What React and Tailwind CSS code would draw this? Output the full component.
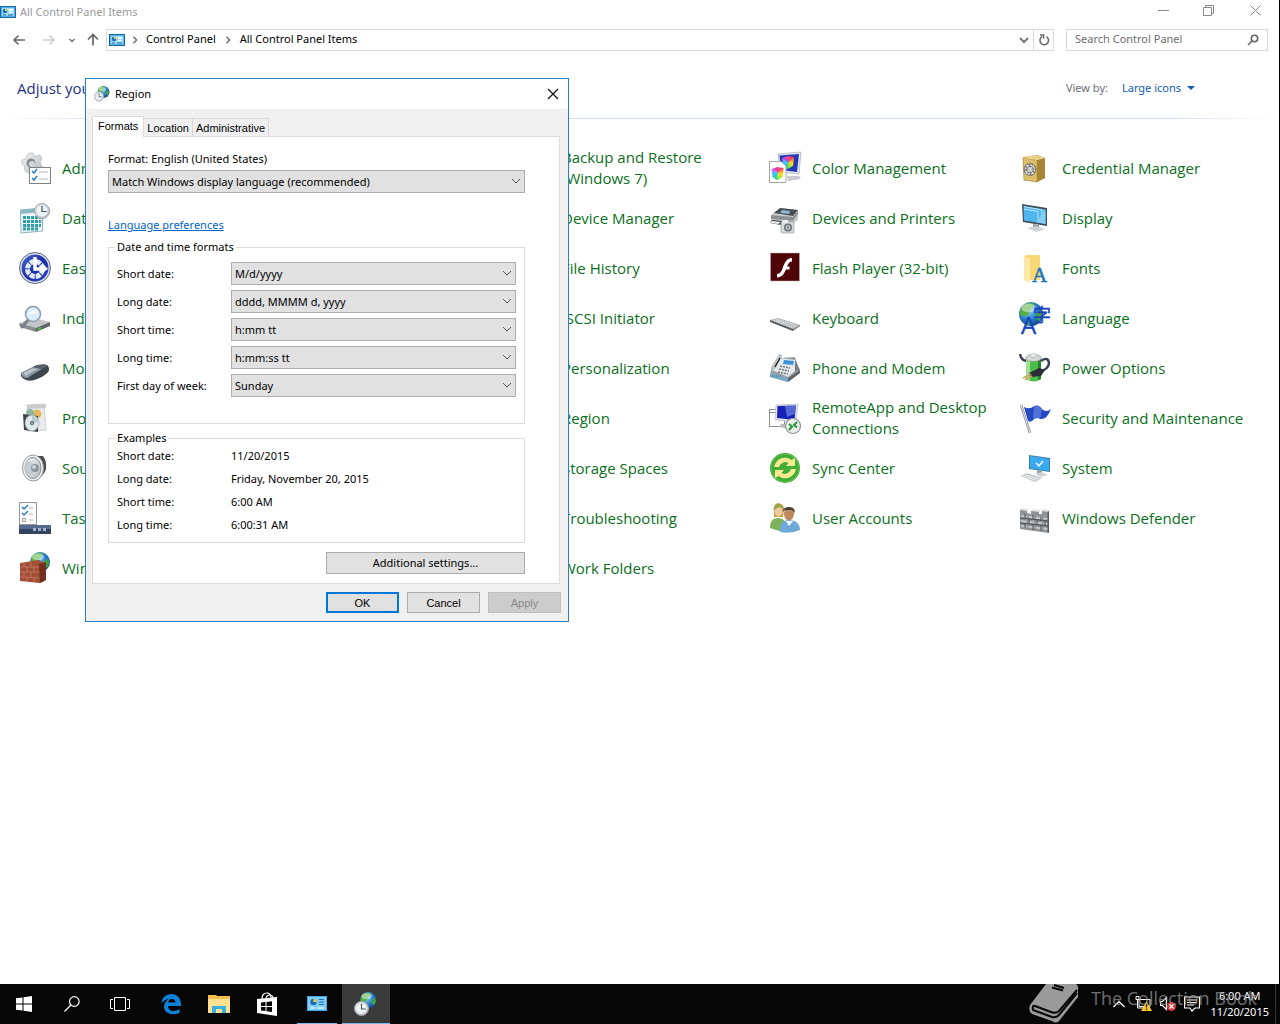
import React, { useState } from 'react';

const Globe = ({ cx, cy, r }) => (
  <g transform={`translate(${cx} ${cy}) scale(${r / 10})`}>
    <circle r="10" fill="url(#globe)" />
    <path d="M-8.500-5C-6-9-1-9.500 2-9L3-7L0-4L-2 0L-5 2L-9 1Z" fill="#58b03c" />
    <path d="M4-1L8-3L9.500 1L7 6L4 4Z" fill="#3f9f42" />
    <path d="M-4 4L0 5L-1 9.500L-4 9Z" fill="#3f9a4a" />
    <ellipse cx="-2" cy="-5" rx="6" ry="3.500" fill="#fff" opacity=".45" />
  </g>
);

const Clock = ({ cx, cy, r }) => (
  <g transform={`translate(${cx} ${cy}) scale(${r / 8})`}>
    <circle r="7.500" fill="url(#silver)" stroke="#9aa1a6" />
    <circle r="5.800" fill="#eef3f5" stroke="#c3cacf" strokeWidth=".5" />
    <path d="M0-5V0.500H4.500" fill="none" stroke="#44555f" strokeWidth="1.200" />
  </g>
);

const ColorCube = ({ x, y, s }) => (
  <g transform={`translate(${x} ${y}) scale(${s})`}>
    <path d="M0 2L6 5L5 12L1 9Z" fill="url(#cubeleft)" />
    <path d="M6 5L11 1L10 9L5 12Z" fill="url(#cuberight)" />
    <path d="M0 2L5 0L11 1L6 5Z" fill="url(#cubetop)" />
  </g>
);

const ControlPanelArt = () => (
  <g>
    <rect x=".5" y=".5" width="15" height="11" fill="#4fb4ee" stroke="#1767a5" />
    <rect x="2" y="2" width="12" height="8" fill="#9edcfb" />
    <circle cx="5" cy="5" r="2.300" fill="#1b6fb5" />
    <path d="M5 5V2.700A2.300 2.300 0 0 1 7.300 5Z" fill="#f4d03f" />
    <path d="M9 3h4v2H9zM9 6h4v1H9z" fill="#fff" />
    <path d="M3 9h3M8 9h5" stroke="#1767a5" />
  </g>
);

// Same drawing without the dark frame, for the taskbar
const ControlPanelTile = () => (
  <g>
    <rect width="20" height="15" fill="#3fa9e5" />
    <rect x="1" y="1" width="18" height="13" fill="#7fd0f8" />
    <circle cx="6.500" cy="6" r="3.200" fill="#1d6fb4" />
    <path d="M6.500 6V2.800A3.200 3.200 0 0 1 9.700 6Z" fill="#f2cf49" />
    <path d="M12 3.500h5M12 6h5M12 8.500h5" stroke="#1d6fb4" strokeWidth="1.200" />
    <path d="M3 12h5M10 12h7" stroke="#fff" strokeWidth="1.200" />
  </g>
);

const icons = {
  tools: (
    <>
      <path d="M10 1l4 0 1 3 3 0 3-1 2 4-2 3 1 3 2 2-1 4-4 0-2 3-4 2-2-3-4-1-2-3 1-3-3-2 0-4 4-1 1-3z" fill="url(#silver)" stroke="#a9adb0" strokeWidth=".6" />
      <circle cx="12" cy="11" r="4.500" fill="#858b90" />
      <circle cx="13" cy="12" r="3" fill="#d3d7da" />
      <rect x="10.500" y="15.500" width="21" height="16" fill="#fdfdfd" stroke="#7b8084" />
      <path d="M13 19l2 2 3-4M13 26l2 2 3-4" fill="none" stroke="#2f7fc1" strokeWidth="1.500" />
      <path d="M20 20h9M20 27h9" stroke="#b4b9bc" />
    </>
  ),
  date: (
    <>
      <path d="M1.500 8L23.500 6V29L2 31Z" fill="#f0f8f9" stroke="#8fb5bd" />
      <path d="M1 8L24 6V10L1 12Z" fill="#8db7c1" />
      <path d="M4 15.500H22M4 19.500H22M4 23.500H22M4 27H20" stroke="#2e9fac" strokeWidth="3" strokeDasharray="3 1" />
      <Clock cx={23} cy={9} r={8} />
    </>
  ),
  ease: (
    <>
      <circle cx="16" cy="16" r="15.500" fill="#dfe4ee" stroke="#596684" />
      <circle cx="16" cy="16" r="13.500" fill="url(#deepblue)" />
      <circle cx="16" cy="17" r="7.500" fill="none" stroke="#e6ecf7" strokeWidth="5" strokeDasharray="5 1" />
      <path d="M16 5v12h9" fill="none" stroke="#fff" strokeWidth="3.500" />
      <path d="M23 11l6 6-6 4z" fill="#fff" />
    </>
  ),
  index: (
    <>
      <path d="M0 21L15 16L31 20L17 27Z" fill="#c2c6c8" />
      <path d="M0 21L17 26V30L1 25Z" fill="#868c90" />
      <path d="M17 26L31 20V24L17 30Z" fill="#5f666a" />
      <path d="M19 26l3-1v2l-3 1z" fill="#4dc340" />
      <path d="M10 17L3 25" stroke="#777f88" strokeWidth="3" strokeLinecap="round" />
      <circle cx="14" cy="12" r="7.500" fill="#dcefff" stroke="#8b99a7" strokeWidth="1.500" />
      <path d="M9 12Q14 6 19 11Q14 11 9 12" fill="#fff" />
    </>
  ),
  mouse: (
    <>
      <path d="M2 21L14 15C20 12 27 12 29 14C31 17 30 20 27 22C21 27 12 30 7 28C3 26 1 24 2 21Z" fill="#3d454d" />
      <path d="M2 21L14 15L23 17C18 20 12 23 9 26C5 26 2 24 2 21Z" fill="#8d99a4" />
      <path d="M4 21L14 16.500L19 17C14 19 10 21 7 24Z" fill="#bdc7d0" />
      <path d="M14 15C20 12 26 12 29 14L23 17Z" fill="#56616b" />
    </>
  ),
  programs: (
    <>
      <path d="M8 3L25 2L27 28L9 29Z" fill="#e9ebec" stroke="#b6b9bb" strokeWidth=".6" />
      <path d="M8 3L27 2V6L8 7Z" fill="#c9cccf" />
      <circle cx="18" cy="12" r="4.500" fill="#e9b45e" />
      <circle cx="11" cy="11" r="4" fill="#8fb8a2" />
      <path d="M4 12L19 14V30L5 28Z" fill="#3d4248" />
      <ellipse cx="13" cy="21" rx="7" ry="8" fill="#dfe8ea" stroke="#949b9f" strokeWidth=".6" />
      <path d="M13 13Q19 16 20 20L13 21Z" fill="#b4cdd5" />
      <circle cx="13" cy="21" r="2" fill="#4f565b" />
      <circle cx="13" cy="21" r=".8" fill="#fff" />
    </>
  ),
  sound: (
    <>
      <path d="M14 4L24 4Q28 9 27 17Q26 22 17 29Z" fill="#4b4e50" />
      <ellipse cx="14" cy="16" rx="10.500" ry="13" fill="#f4f4f4" stroke="#9a9a9a" />
      <ellipse cx="14" cy="16" rx="8" ry="10.500" fill="url(#silver)" stroke="#8b9094" />
      <path d="M8 9Q16 11 16 16Q16 22 8 23Q4 16 8 9Z" fill="#c5cdd2" />
      <circle cx="16" cy="16" r="4" fill="#8997a2" />
      <circle cx="15" cy="15" r="2" fill="#c9d6e0" />
    </>
  ),
  taskbar: (
    <>
      <rect x=".5" y=".5" width="17" height="22" fill="#fcfcfc" stroke="#92979c" />
      <path d="M3 5l2 2 4-4M3 11l2 2 4-4" fill="none" stroke="#2f7fc1" strokeWidth="1.500" />
      <rect x="3.500" y="16.500" width="3" height="3" fill="none" stroke="#b8a0a0" />
      <path d="M10 6h4M10 12h4M10 18h4" stroke="#bbb" />
      <rect y="23" width="32" height="9" fill="#33435f" />
      <rect y="23" width="32" height="4" fill="#566a90" />
      <path d="M14 26h3v3h-3zM19 26h3v3h-3zM24 26h3v3h-3z" fill="#a5b3cb" />
    </>
  ),
  firewall: (
    <>
      <Globe cx={21} cy={10} r={10} />
      <path d="M1 11L20 8L27 12V28L21 31L1 29Z" fill="#a34e36" />
      <path d="M20 12L27 10V28L21 31Z" fill="#74301f" />
      <path d="M1 15L20 15M1 20L20 20M1 25L20 26M5 11V15M12 10V15M8 15V20M15 15V20M5 20V25M12 20V25M8 25V29M15 26V30" stroke="#c98469" strokeWidth=".7" />
    </>
  ),
  color: (
    <>
      <path d="M9 2L32 0L30 22L11 20Z" fill="#dfe3ec" stroke="#9aa2b5" strokeWidth=".6" />
      <path d="M10.500 3.500L30 2L28 20L12 18Z" fill="#2338b8" />
      <ColorCube x={13} y={4} s={1.1} />
      <path d="M18 24L30 24L32 27L19 29Z" fill="#c9ccd0" />
      <path d="M.5 9.500H12L17 14V30.500H.5Z" fill="#fff" stroke="#a5a8ab" />
      <ColorCube x={2.5} y={15} s={1.1} />
    </>
  ),
  printer: (
    <>
      <path d="M3 12L11 6L29 8V18L21 24L2 19Z" fill="#c9cbcd" />
      <path d="M5 11L11 6L29 8L24 14Z" fill="#454c52" />
      <path d="M13 8L21 9L20 12L11 11Z" fill="#93b6ce" />
      <path d="M2 13L24 15L29 9V12L24 19L2 17Z" fill="#8c9093" />
      <path d="M3 18L13 19L12 23L1 21Z" fill="#3f4346" />
      <path d="M3 19L12 20L9 22L1 21Z" fill="#eee" />
      <rect x="12" y="20" width="13" height="11" rx="1" fill="#d5d8da" stroke="#8c9194" strokeWidth=".6" />
      <rect x="13" y="18" width="6" height="3" fill="#eceeef" />
      <circle cx="19" cy="25.500" r="4" fill="#6f7478" />
      <circle cx="19" cy="25.500" r="2.300" fill="#d5dee4" />
      <circle cx="19" cy="25.500" r="1" fill="#444" />
    </>
  ),
  flash: (
    <>
      <rect x="1.500" y="1" width="29" height="28" fill="#4d0508" stroke="#c9b5b5" strokeWidth=".5" />
      <path d="M23 6C18 6 16 10 14 15C13 19 11 22 8 22V25.500C13 25 15 22 17 17.500H20.500V14.500H18C19.500 11 20.500 9.500 23 9.500Z" fill="#fff" />
    </>
  ),
  keyboard: (
    <>
      <path d="M1 18L9 16L31 23L24 27Z" fill="#a5a9ad" />
      <path d="M1 18L24 27V29L1 20Z" fill="#55595d" />
      <path d="M24 27L31 23V24L24 29Z" fill="#777" />
      <path d="M4 18L25 26M6 17.500L27 25M8 17L29 24" stroke="#dfe1e3" strokeWidth="1.200" strokeDasharray="2 .7" />
    </>
  ),
  phone: (
    <>
      <path d="M2 18L10 6L26 5L31 21L19 30L1 25Z" fill="#9aa0a5" />
      <path d="M3 18L11 6L26 8L26 19L19 25Z" fill="#e5e8ea" />
      <path d="M15 8L25 9L24 13L14 12Z" fill="#3a93d8" />
      <path d="M11 14L21 16M10 17L20 19M9 20L19 22" stroke="#71787e" strokeWidth="1.500" strokeDasharray="2 1" />
      <path d="M4 16L11 4" stroke="#bdc3c7" strokeWidth="4" strokeLinecap="round" />
      <path d="M6 15L11 6" stroke="#23272a" strokeWidth="1.500" />
      <path d="M1 21L19 26V30L1 25Z" fill="#76a9c8" />
      <path d="M19 26L31 18V21L19 30Z" fill="#5d646a" />
      <path d="M26 8L31 18L26 19Z" fill="#777d82" />
      <path d="M3 24h9" stroke="#2c6c96" strokeDasharray="1 1" />
    </>
  ),
  remote: (
    <>
      <rect x=".5" y="7.500" width="15" height="17" fill="#fff" stroke="#8c9196" />
      <path d="M1 10.500H8" stroke="#8c9196" />
      <path d="M7 3L29 2L27 20L6 18Z" fill="#e1e4ea" stroke="#a4a9b2" strokeWidth=".5" />
      <path d="M8.500 4L27 3.500L25.500 18L8 16Z" fill="#1521b6" />
      <path d="M16 4L27 3.500L26 12L18 15Z" fill="#6e86e3" opacity=".7" />
      <path d="M12 22L20 22V27L10 25Z" fill="#bbbfc4" />
      <circle cx="24" cy="24" r="7.500" fill="#ececec" stroke="#909599" strokeWidth="1.200" />
      <path d="M20 22L23 24.500L20 28M28 20L25 23L28 25.500" fill="none" stroke="#259a37" strokeWidth="2" />
    </>
  ),
  sync: (
    <>
      <circle cx="16" cy="16" r="15" fill="#3fad36" />
      <circle cx="16" cy="16" r="14" fill="none" stroke="#5fc14c" />
      <path d="M5 15A11 11 0 0 1 22.500 8L26 6V14H17L19.500 11A6.500 6.500 0 0 0 10 15Z" fill="#fce891" />
      <path d="M27 17A11 11 0 0 1 9.500 24L6 26V18H15L12.500 21A6.500 6.500 0 0 0 22 17Z" fill="#fce891" />
    </>
  ),
  users: (
    <>
      <path d="M1 26C1 19 4 16 9 16C15 16 17 20 17 25L10 29Z" fill="#7cb25a" />
      <path d="M5 6Q5 2 9 1Q15 2 15 7L14 15L5 15Z" fill="#c09e40" />
      <ellipse cx="9.500" cy="9.500" rx="4" ry="5" fill="#f1c9a0" />
      <path d="M4 8Q6 1 12 3L15 7L10 5Z" fill="#90a547" />
      <path d="M11 30C10 22 14 18 20 18C27 18 31 22 31 28Q22 32 11 30Z" fill="#6ea9d9" />
      <path d="M17 19L20 24L24 19Z" fill="#fff" />
      <ellipse cx="20" cy="12" rx="5" ry="6.500" fill="#bd8a60" />
      <path d="M14 10Q14 5 20 5Q26 5 26 11L23 8L16 8Z" fill="#4a3d35" />
    </>
  ),
  safe: (
    <>
      <path d="M4 5L18 3L26 6V26L18 30L5 28Z" fill="#c5a24f" />
      <path d="M4 6L18 8V30L5 28Z" fill="#dcbf6d" stroke="#a78636" strokeWidth=".6" />
      <path d="M18 8L26 6V26L18 30Z" fill="#a98634" />
      <path d="M4 6L15 3L26 6L18 8Z" fill="#ead38c" />
      <circle cx="11" cy="17.500" r="6.500" fill="#7e7a70" />
      <circle cx="11" cy="17.500" r="4.500" fill="none" stroke="#e2e2df" strokeWidth="1.500" strokeDasharray="2 1.500" />
      <circle cx="11" cy="17.500" r="2.500" fill="#c9c9c6" />
      <path d="M7 13L15 22M15 13L7 22" stroke="#ddd" />
    </>
  ),
  display: (
    <>
      <path d="M3 2L28 6V24L4 20Z" fill="#3f4b55" />
      <path d="M4.500 4L26.500 7.500V22L5 18.500Z" fill="#4eb5ee" />
      <path d="M5 7L19 9.500V20.500M5 4.500L23 8V21" fill="none" stroke="#b9e4fa" />
      <path d="M26.500 7.500V22L17 20Z" fill="#83cff5" />
      <path d="M14 22L20 23V26L14 26Z" fill="#939a9f" />
      <path d="M8 26L17 24L26 27L18 30Z" fill="#ced3d6" />
    </>
  ),
  fonts: (
    <>
      <path d="M5 4L8 3H21V28H9Z" fill="#f8d775" />
      <path d="M5 4L11 7V31L5 28Z" fill="#fce9a5" />
      <text x="13" y="30" fontSize="21" fontFamily="Liberation Serif, serif" fill="#1f75b5" stroke="#1f75b5" strokeWidth=".6">A</text>
    </>
  ),
  language: (
    <>
      <Globe cx={12} cy={12} r={12} />
      <text x="14" y="20" fontSize="18" fontFamily="Noto Sans CJK JP, sans-serif" fill="#173fc0" stroke="#173fc0" strokeWidth=".4">字</text>
      <text x="2" y="32" fontSize="24" fontFamily="Open Sans, sans-serif" fill="#1443c6" stroke="#1443c6" strokeWidth=".4">A</text>
    </>
  ),
  power: (
    <>
      <path d="M7 6V27Q15 32 22 27V6Z" fill="#4bbd49" />
      <path d="M7 6V27Q9 29 11 29V7Z" fill="#9ee194" />
      <path d="M19 7V28L22 27V6Z" fill="#24812a" />
      <ellipse cx="14.500" cy="6" rx="8" ry="3.500" fill="#d5d9d6" stroke="#838b86" strokeWidth=".6" />
      <ellipse cx="14.500" cy="3.500" rx="3.500" ry="1.800" fill="#eee" stroke="#8b928d" strokeWidth=".5" />
      <path d="M1 2Q2 8 7 9M22 9Q29 4 30 11Q30 17 20 20" fill="none" stroke="#3b4150" strokeWidth="2.400" />
      <path d="M10 21L20 16L26 18L22 24L12 25Z" fill="#2c2d34" />
      <path d="M4 26L12 22M6 28L13 24" stroke="#c9a45d" strokeWidth="1.500" />
    </>
  ),
  flag: (
    <>
      <path d="M2 3L11 31" stroke="#8f959b" strokeWidth="2.500" />
      <path d="M2 3L11 31" stroke="#dfe3e6" strokeWidth="1" />
      <path d="M5 5Q11 8 15 4Q20 2 23 7Q27 11 32 7Q28 18 21 17Q17 14 13 19Q11 20 9 19Z" fill="#2748c4" />
      <path d="M15 4Q20 2 23 7L21 17Q17 14 14 18Z" fill="#6d8ce8" opacity=".6" />
    </>
  ),
  system: (
    <>
      <path d="M10 3L31 6V20L10 17Z" fill="#3c7fa8" />
      <path d="M11 4L30 7V19L11 16Z" fill="#38aaf0" />
      <path d="M17 11L20 14L24 9" fill="none" stroke="#fff" strokeWidth="1.500" />
      <path d="M18 18L23 19V22H18Z" fill="#9aa0a4" />
      <path d="M16 22L23 20L29 23L22 25Z" fill="#cfd3d5" />
      <path d="M1 24L8 21L23 26L16 30Z" fill="#c3c7ca" />
      <path d="M3 24L17 28M6 23L20 27" stroke="#f2f2f2" />
    </>
  ),
  defender: (
    <>
      <path d="M1 7L8 8V11L12 12V8L20 9V12L23 12V8L30 9V31L1 27Z" fill="#8f9396" />
      <path d="M1 7L4 6L9 7V9L1 8ZM12 8L15 7L21 8V10L12 9ZM22 8L25 7L30 8V10L22 9Z" fill="#e4e5e6" />
      <path d="M2 14L29 17M2 19L29 22M2 24L29 27" stroke="#c3c6c8" strokeWidth="2" strokeDasharray="6 1.500" />
      <path d="M1 16L30 19M1 21L30 24M6 12V16M14 13V17M22 15V19M10 17V21M18 18V23M26 19V24M6 22V26M14 23V28M22 24V29" stroke="#4d5154" />
      <path d="M28.500 10L30 9V31L28.500 30Z" fill="#55595c" />
    </>
  ),
};

const items = [
  ['Administrative Tools', 'tools'], ['AutoPlay'], ['Backup and Restore (Windows 7)'], ['Color Management', 'color'], ['Credential Manager', 'safe'],
  ['Date and Time', 'date'], ['Default Programs'], ['Device Manager'], ['Devices and Printers', 'printer'], ['Display', 'display'],
  ['Ease of Access Center', 'ease'], ['File Explorer Options'], ['File History'], ['Flash Player (32-bit)', 'flash'], ['Fonts', 'fonts'],
  ['Indexing Options', 'index'], ['Internet Options'], ['iSCSI Initiator'], ['Keyboard', 'keyboard'], ['Language', 'language'],
  ['Mouse', 'mouse'], ['Network and Sharing Center'], ['Personalization'], ['Phone and Modem', 'phone'], ['Power Options', 'power'],
  ['Programs and Features', 'programs'], ['Recovery'], ['Region'], ['RemoteApp and Desktop Connections', 'remote'], ['Security and Maintenance', 'flag'],
  ['Sound', 'sound'], ['Speech Recognition'], ['Storage Spaces'], ['Sync Center', 'sync'], ['System', 'system'],
  ['Taskbar and Navigation', 'taskbar'], ['Text to Speech'], ['Troubleshooting'], ['User Accounts', 'users'], ['Windows Defender', 'defender'],
  ['Windows Firewall', 'firewall'], ['Windows To Go'], ['Work Folders'],
];

const formats = [
  { id: 'short-date', label: 'Short date:', value: 'M/d/yyyy' },
  { id: 'long-date', label: 'Long date:', value: 'dddd, MMMM d, yyyy' },
  { id: 'short-time', label: 'Short time:', value: 'h:mm tt' },
  { id: 'long-time', label: 'Long time:', value: 'h:mm:ss tt' },
  { id: 'first-day', label: 'First day of week:', value: 'Sunday' },
];

const examples = [
  ['Short date:', '11/20/2015'],
  ['Long date:', 'Friday, November 20, 2015'],
  ['Short time:', '6:00 AM'],
  ['Long time:', '6:00:31 AM'],
];

// Shared gradients for the item icons
const Gradients = () => (
  <svg className="absolute h-0 w-0" aria-hidden="true">
    <defs>
      <radialGradient id="globe" cx=".4" cy=".35" r=".7">
        <stop offset="0" stopColor="#8fd4f5" />
        <stop offset=".6" stopColor="#2479c4" />
        <stop offset="1" stopColor="#123f83" />
      </radialGradient>
      <linearGradient id="silver" x1="0" y1="0" x2="1" y2="1">
        <stop offset="0" stopColor="#f4f5f6" />
        <stop offset="1" stopColor="#b3b9bd" />
      </linearGradient>
      <linearGradient id="deepblue" x1="0" y1="0" x2="1" y2="1">
        <stop offset="0" stopColor="#4a6cd0" />
        <stop offset=".5" stopColor="#1c2fa6" />
        <stop offset="1" stopColor="#2846c4" />
      </linearGradient>
      <linearGradient id="cubeleft" x1="0" y1="0" x2="0" y2="1">
        <stop offset="0" stopColor="#f04df0" />
        <stop offset=".4" stopColor="#35c6ff" />
        <stop offset="1" stopColor="#20e070" />
      </linearGradient>
      <linearGradient id="cuberight" x1="0" y1="0" x2="0" y2="1">
        <stop offset="0" stopColor="#ff4a2a" />
        <stop offset=".5" stopColor="#ffe01e" />
        <stop offset="1" stopColor="#4ce83a" />
      </linearGradient>
      <linearGradient id="cubetop" x1="0" y1="0" x2="1" y2="0">
        <stop offset="0" stopColor="#c94dff" />
        <stop offset="1" stopColor="#ff3b30" />
      </linearGradient>
    </defs>
  </svg>
);

const Chevron = ({ className }) => (
  <svg viewBox="0 0 10 10" className={className} fill="none" stroke="currentColor" aria-hidden="true">
    <path d="M1 3l4 4 4-4" />
  </svg>
);

const Combo = ({ id, value }) => (
  <div className="relative flex-1">
    <select id={id} className="block h-[23px] w-full appearance-none border border-[#adadad] bg-[#e1e1e1] pl-[3px] pr-6 text-[11px] leading-4">
      <option>{value}</option>
    </select>
    <Chevron className="pointer-events-none absolute right-1 top-1.5 h-[10px] w-[10px] text-[#555]" />
  </div>
);

const TitleBar = () => (
  <header className="flex h-6 items-center">
    <svg viewBox="0 0 16 12" className="h-3 w-4 shrink-0" aria-hidden="true"><ControlPanelArt /></svg>
    <h1 className="ml-1 flex-1 text-[11px] text-[#999]">All Control Panel Items</h1>
    <div className="mb-1 flex text-[#888]">
      <button aria-label="Minimize" className="flex h-5 w-[45px] items-center justify-center">
        <svg viewBox="0 0 11 11" className="h-[11px] w-[11px]" stroke="currentColor"><path d="M0 5.500h11" /></svg>
      </button>
      <button aria-label="Restore" className="flex h-5 w-[45px] items-center justify-center">
        <svg viewBox="0 0 11 11" className="h-[11px] w-[11px]" fill="none" stroke="currentColor"><path d="M.5 2.500h8v8h-8zM2.500 2.500v-2h8v8h-2" /></svg>
      </button>
      <button aria-label="Close" className="flex h-5 w-12 items-center justify-center">
        <svg viewBox="0 0 11 11" className="h-[11px] w-[11px]" stroke="currentColor"><path d="M.5.5l10 10M10.500.5l-10 10" /></svg>
      </button>
    </div>
  </header>
);

const AddressBar = () => (
  <div className="mt-1 flex h-[23px] items-center pr-[11px]">
    <nav className="flex w-[106px] items-center pl-3" aria-label="History">
      <button aria-label="Back" className="text-[#666]">
        <svg viewBox="0 0 14 12" className="h-3 w-[14px]" fill="none" stroke="currentColor" strokeWidth="1.500"><path d="M13 6H2M6.500 1.500L2 6l4.500 4.500" /></svg>
      </button>
      <button aria-label="Forward" className="ml-4 text-[#ccc]">
        <svg viewBox="0 0 14 12" className="h-3 w-[14px]" fill="none" stroke="currentColor" strokeWidth="1.500"><path d="M1 6h11M7.500 1.500L12 6l-4.500 4.500" /></svg>
      </button>
      <button aria-label="Recent locations" className="ml-3 text-[#777]">
        <svg viewBox="0 0 8 8" className="h-2 w-2" fill="none" stroke="currentColor" strokeWidth="1.500"><path d="M1.500 3L4 5.500 6.500 3" /></svg>
      </button>
      <button aria-label="Up" className="ml-[11px] text-[#666]">
        <svg viewBox="0 0 12 13" className="h-[13px] w-3" fill="none" stroke="currentColor" strokeWidth="1.700"><path d="M6 12.500V2M1 6.500L6 1.500l5 5" /></svg>
      </button>
    </nav>
    <div className="flex h-[22px] flex-1 items-center border border-[#d9d9d9] text-[11px]">
      <svg viewBox="0 0 16 12" className="ml-0.5 h-3 w-4" aria-hidden="true"><ControlPanelArt /></svg>
      <Chevron className="ml-1.5 mr-[7px] h-2 w-2 -rotate-90 stroke-2 text-[#777]" />
      <a href="#control-panel">Control Panel</a>
      <Chevron className="mx-2 h-2 w-2 -rotate-90 stroke-2 text-[#777]" />
      <a href="#all-items">All Control Panel Items</a>
      <button aria-label="Previous locations" className="ml-auto mr-1">
        <Chevron className="h-[10px] w-[10px] stroke-2 text-[#777]" />
      </button>
      <button aria-label="Refresh" className="flex h-full w-5 items-center justify-center border-l border-[#d9d9d9] text-[#666]">
        <svg viewBox="0 0 12 12" className="h-3 w-3" fill="none" stroke="currentColor" strokeWidth="1.500"><path d="M8.500 2.700A4.300 4.300 0 1 1 4 2.700M2 1H5.500V4.500" /></svg>
      </button>
    </div>
    <label className="ml-3 flex h-[22px] w-[202px] items-center border border-[#d9d9d9] pl-2 pr-2">
      <input type="text" aria-label="Search Control Panel" placeholder="Search Control Panel" className="min-w-0 flex-1 text-[11px] outline-none placeholder:text-[#6d6d6d]" />
      <svg viewBox="0 0 12 12" className="h-3 w-3 text-[#666]" fill="none" stroke="currentColor" strokeWidth="1.600" aria-hidden="true"><circle cx="7.500" cy="4.500" r="3.200" /><path d="M5 7L1 11" /></svg>
    </label>
  </div>
);

const tabs = ['Formats', 'Location', 'Administrative'];

const RegionDialog = () => {
  const [tab, setTab] = useState('Formats');

  return (
    <section role="dialog" aria-labelledby="region-title" className="absolute left-[85px] top-[78px] w-[484px] border border-[#2a80c4] bg-[#f0f0f0] text-[11px] leading-4 text-black">
      <div className="flex h-[30px] items-center bg-white pl-2 pr-[9px]">
        <svg viewBox="0 0 32 32" className="h-4 w-4" aria-hidden="true"><Globe cx={19} cy={12} r={12} /><Clock cx={10} cy={21} r={10} /></svg>
        <h2 id="region-title" className="ml-[5px] flex-1">Region</h2>
        <button aria-label="Close Region">
          <svg viewBox="0 0 12 12" className="h-3 w-3" stroke="#111" strokeWidth="1.200"><path d="M1 1l10 10M11 1L1 11" /></svg>
        </button>
      </div>

      <div className="px-1.5 pt-[7px]">
        <div role="tablist" className="flex items-end font-['Liberation_Sans',Arial,sans-serif]">
          {tabs.map((name) => (
            <button
              key={name}
              role="tab"
              aria-selected={tab === name}
              onClick={() => setTab(name)}
              className={
                tab === name
                  ? 'relative -mb-px h-[21px] border border-b-0 border-[#dcdcdc] bg-white px-[5px] pb-0.5'
                  : 'h-[18px] border border-b-0 border-l-0 border-[#d9d9d9] px-[3px]'
              }
            >
              {name}
            </button>
          ))}
        </div>

        <div role="tabpanel" className="mr-0.5 border border-[#dcdcdc] bg-white pb-[9px] pl-[15px] pr-[34px] pt-3.5">
          <label htmlFor="format" className="mb-[3px] block">Format: English (United States)</label>
          <Combo id="format" value="Match Windows display language (recommended)" />
          <a href="#language" className="mt-6 inline-block text-[#0066cc] underline">Language preferences</a>

          <fieldset className="mt-1.5 border border-[#dcdcdc] pb-[26px] pl-2 pr-2">
            <legend className="-ml-0.5 px-0.5">Date and time formats</legend>
            <div className="mt-[7px] flex flex-col gap-[5px]">
              {formats.map((f) => (
                <div key={f.id} className="flex items-center">
                  <label htmlFor={f.id} className="w-[114px]">{f.label}</label>
                  <Combo id={f.id} value={f.value} />
                </div>
              ))}
            </div>
          </fieldset>

          <fieldset className="mt-1.5 border border-[#dcdcdc] pb-[9px] pl-2">
            <legend className="-ml-0.5 px-0.5">Examples</legend>
            <dl className="mt-0.5 flex flex-col gap-[7px]">
              {examples.map(([name, value]) => (
                <div key={name} className="flex">
                  <dt className="w-[114px]">{name}</dt>
                  <dd>{value}</dd>
                </div>
              ))}
            </dl>
          </fieldset>

          <button className="ml-auto mt-[9px] block h-[22px] w-[199px] border border-[#adadad] bg-[#e1e1e1]">Additional settings...</button>
        </div>
      </div>

      <div className="flex justify-end gap-2 pb-2 pr-[7px] pt-2 font-['Liberation_Sans',Arial,sans-serif]">
        <button className="h-[21px] w-[73px] border-2 border-[#0078d7] bg-[#e1e1e1] leading-4">OK</button>
        <button className="h-[21px] w-[73px] border border-[#adadad] bg-[#e1e1e1]">Cancel</button>
        <button disabled className="h-[21px] w-[73px] border border-[#bfbfbf] bg-[#cccccc] text-[#8a8a8a]">Apply</button>
      </div>
    </section>
  );
};

const Taskbar = () => (
  <footer className="relative flex h-10 shrink-0 items-stretch overflow-hidden bg-[#060606] text-white">
    <div className="flex">
      <button aria-label="Start" className="flex w-12 items-center justify-center">
        <svg viewBox="0 0 16 16" className="h-4 w-4" fill="currentColor"><path d="M0 2.300L6.500 1.400V7.500H0zM7.500 1.300L16 0V7.500H7.500zM0 8.500H6.500V14.600L0 13.700zM7.500 8.500H16V16L7.500 14.700z" /></svg>
      </button>
      <button aria-label="Search" className="flex w-12 items-center justify-center">
        <svg viewBox="0 0 16 16" className="h-4 w-4" fill="none" stroke="currentColor" strokeWidth="1.200"><circle cx="10.300" cy="5.500" r="4.800" /><path d="M7 9L.5 15.500" /></svg>
      </button>
      <button aria-label="Task View" className="flex w-12 items-center justify-center">
        <svg viewBox="0 0 20 14" className="h-[14px] w-5" fill="none" stroke="currentColor"><path d="M4.500.5h11v13h-11zM3 2.500H.5v9H3M17 2.500h2.500v9H17" /></svg>
      </button>
    </div>
    <div className="ml-[3px] flex">
      <button aria-label="Edge" className="flex w-12 items-center justify-center">
        <svg viewBox="0 0 20 20" className="h-5 w-5" fill="#0b80d8"><path d="M.3 9.500C1 3.500 5 0 10.300 0C16 0 20 4.200 20 10V12H7C7.300 18 14 18 18.500 15V19C12 22 3 20 3 12.500C3 9.500 5 6.500 8 5.200C4.500 5.200 1.700 7 .3 9.500ZM7.200 8.500H14.500C14.500 4 8 3.500 7.200 8.500Z" /></svg>
      </button>
      <button aria-label="File Explorer" className="flex w-12 items-center justify-center">
        <svg viewBox="0 0 22 18" className="h-[18px] w-[22px]"><path d="M0 0h8l1 1h13v17H0z" fill="#f2bd4b" /><path d="M0 4h22v14H0z" fill="#fde191" /><path d="M4 18v-7h14v7h-4v-4H8v4z" fill="#38b1e0" /></svg>
      </button>
      <button aria-label="Store" className="flex w-12 items-center justify-center">
        <svg viewBox="0 0 22 24" className="h-6 w-[22px]"><path d="M1 7L21 5V24L1 21Z" fill="#fff" /><path d="M6 7Q6 1 11 1Q15 1 15 6M10 6Q11 3 13 3Q17 3 17 6" fill="none" stroke="#fff" strokeWidth="1.200" /><path d="M5 10.500L9.500 10V14H5zM10.500 10L16 9.300V14H10.500zM5 15H9.500V19L5 18.400zM10.500 15H16V20L10.500 19.200z" fill="#060606" /></svg>
      </button>
      <button aria-label="Control Panel" className="ml-1.5 flex w-10 items-center justify-center border-b border-[#76b9ed]">
        <svg viewBox="0 0 20 15" className="h-[15px] w-5"><ControlPanelTile /></svg>
      </button>
      <button aria-label="Region" className="ml-[5px] flex w-12 items-center justify-center border-b border-[#76b9ed] bg-[#3a3a3a]">
        <svg viewBox="0 0 32 32" className="h-6 w-6"><Globe cx={19} cy={11} r={11} /><Clock cx={10} cy={22} r={10} /></svg>
      </button>
    </div>

    <div className="ml-auto flex items-center border-r border-[#333] pr-1.5">
      <button aria-label="Show hidden icons" className="mr-2.5">
        <svg viewBox="0 0 12 8" className="h-2 w-3" fill="none" stroke="currentColor" strokeWidth="1.300"><path d="M.5 7L6 1.500 11.500 7" /></svg>
      </button>
      <button aria-label="Network" className="mr-2">
        <svg viewBox="0 0 17 16" className="h-4 w-[17px]"><path d="M4 3.500h11v7H4zM1 .5h3v3H1zM2.500 4v8h6" fill="none" stroke="#fff" /><path d="M11.500 5L17 15H6Z" fill="#f7c52b" /><path d="M11.500 8v3.500M11.500 12.500v1.500" stroke="#222" strokeWidth="1.200" /></svg>
      </button>
      <button aria-label="Volume" className="mr-2">
        <svg viewBox="0 0 16 16" className="h-4 w-4"><path d="M.5 5.500h2l4-4v12l-4-4h-2z" fill="none" stroke="#fff" strokeWidth="1.200" /><circle cx="11.500" cy="10.500" r="4.500" fill="#d93b3b" /><path d="M9.500 8.500l4 4M13.500 8.500l-4 4" stroke="#fff" strokeWidth="1.200" /></svg>
      </button>
      <button aria-label="Notifications" className="mr-2.5">
        <svg viewBox="0 0 16 16" className="h-4 w-4" fill="none" stroke="#fff" strokeWidth="1.200"><path d="M.5 1h15v11H11l-3 3-2-3H.5zM3 4h10M3 6.500h10M3 9h7" /></svg>
      </button>
      <time dateTime="2015-11-20T06:00" className="text-center text-[11px] leading-4">
        <span className="block">6:00 AM</span>
        <span className="block">11/20/2015</span>
      </time>
    </div>
    <div className="w-1" />

    {/* Collection Book mark over the tray */}
    <div className="pointer-events-none absolute right-[23px] top-0 flex items-start opacity-70">
      <svg viewBox="0 0 50 40" className="h-10 w-[50px]" aria-hidden="true">
        <path d="M17 0H47Q50 2 49 5L49 13L30 37Q27 40 23 37L3 30Q-1 27 1 21Z" fill="#d9d9d9" />
        <path d="M25 1L35 4M23 3.500L34 6.500" stroke="#060606" strokeWidth="2" />
        <path d="M48 6L30 27Q27 30 22 28L6 22Q3 21 4 26L23 33Q27 34 30 31L48 9" fill="none" stroke="#060606" strokeWidth="2" />
      </svg>
      <span className="ml-3 mt-0.5 font-['Open_Sans',sans-serif] text-[18px] leading-6 text-[#9a9a9a]">The Collection Book</span>
    </div>
  </footer>
);

const App = () => (
  <div className="relative flex min-h-screen flex-col bg-white font-['Noto_Sans','Open_Sans',sans-serif] text-black">
    <Gradients />
    <div className="flex flex-1 flex-col border-r border-black">
      <TitleBar />
      <AddressBar />
      <main className="pt-[23px]">
        <div className="flex items-center pb-4 pl-[17px] pr-[84px]">
          <h2 className="flex-1 font-['Open_Sans',sans-serif] text-[15px] leading-7 text-[#1e3287]">Adjust your computer’s settings</h2>
          <span className="text-[11px] text-[#6d6d7d]">View by:</span>
          <button className="ml-3.5 flex items-center gap-1.5 text-[11px] text-[#0f5bb0]">
            Large icons
            <svg viewBox="0 0 8 4" className="h-1 w-2" fill="currentColor" aria-hidden="true"><path d="M0 0h8L4 4z" /></svg>
          </button>
        </div>
        <div className="h-px bg-[linear-gradient(to_right,#fff,#d3e0ec_8%,#d3e0ec_92%,#fff)]" />
        <ul className="grid grid-cols-[repeat(auto-fill,250px)] pl-[19px] pt-6 font-['Open_Sans',sans-serif]">
          {items.map(([name, icon]) => (
            <li key={name} className="h-[50px]">
              <a href="#item" className="flex h-full items-center gap-[11px] pr-[22px] text-[15px] leading-[21px] text-[#0b7021]">
                <svg viewBox="0 0 32 32" className="h-8 w-8 shrink-0 overflow-visible" aria-hidden="true">{icons[icon]}</svg>
                <span>{name}</span>
              </a>
            </li>
          ))}
        </ul>
      </main>
    </div>
    <RegionDialog />
    <Taskbar />
  </div>
);

export default App;
